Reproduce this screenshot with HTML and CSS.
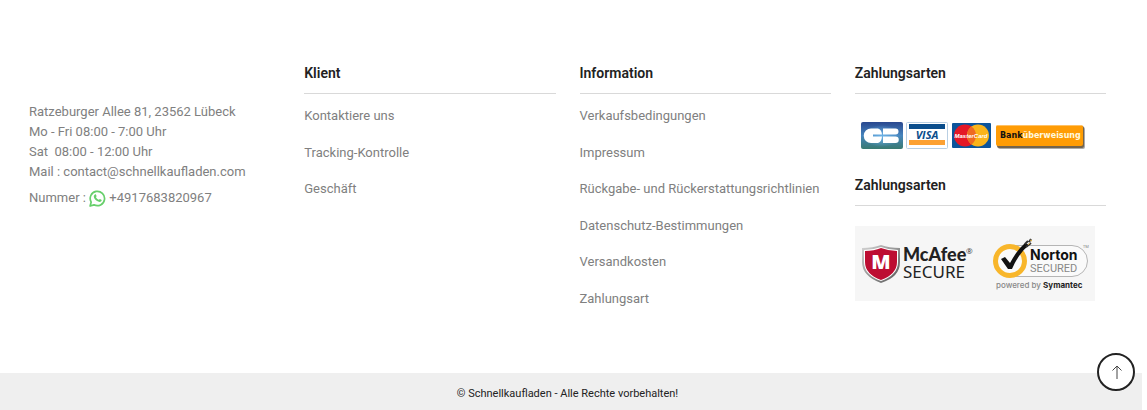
FILE: index.html
```html
<!DOCTYPE html>
<html lang="de">
<head>
	<meta charset="UTF-8">
	<title>Schnellkaufladen</title>
	<link rel="stylesheet" href="styles.css">
</head>
<body>
	<footer class="footer">
		<div class="columns">
			<div class="contact">
				<p>Ratzeburger Allee 81, 23562 Lübeck</p>
				<p>Mo - Fri 08:00 - 7:00 Uhr</p>
				<p>Sat&nbsp; 08:00 - 12:00 Uhr</p>
				<p>Mail : contact@schnellkaufladen.com</p>
				<p class="phone">Nummer :
					<svg class="whatsapp" width="17" height="17" viewBox="0 0 18 18">
						<path d="M1.2 17l1.1-4.2A7.6 7.6 0 1 1 5.3 15.700z" fill="#fff" stroke="#67cf6b" stroke-width="1.8" stroke-linejoin="round"/>
						<path d="M6.200 4.800c.4-.4 1-.3 1.200.2l.6 1.400c.1.500-.6 1-.6 1.400.6 1.200 1.500 2 2.800 2.600.5.100.9-1 1.400-.9l1.500.8c.5.300.300 1.200-.2 1.700-1.200 1.100-3.100.6-4.800-.5-1.500-1-2.800-2.700-3-4.300-.1-1 .4-1.900 1.100-2.400z" fill="#67cf6b"/>
					</svg>
					+4917683820967</p>
			</div>
			<div class="col">
				<h4>Klient</h4>
				<ul class="links">
					<li><a href="#">Kontaktiere uns</a></li>
					<li><a href="#">Tracking-Kontrolle</a></li>
					<li><a href="#">Geschäft</a></li>
				</ul>
			</div>
			<div class="col">
				<h4>Information</h4>
				<ul class="links">
					<li><a href="#">Verkaufsbedingungen</a></li>
					<li><a href="#">Impressum</a></li>
					<li><a href="#">Rückgabe- und Rückerstattungsrichtlinien</a></li>
					<li><a href="#">Datenschutz-Bestimmungen</a></li>
					<li><a href="#">Versandkosten</a></li>
					<li><a href="#">Zahlungsart</a></li>
				</ul>
			</div>
			<div class="col">
				<h4>Zahlungsarten</h4>
				<svg class="payment" width="240" height="41" viewBox="0 0 240 41">
					<defs>
						<linearGradient id="cb" x1="0" y1="0" x2="0" y2="1">
							<stop offset="0" stop-color="#29478f"/>
							<stop offset=".5" stop-color="#4584bd"/>
							<stop offset="1" stop-color="#397a70"/>
						</linearGradient>
						<radialGradient id="cbglow">
							<stop offset="0" stop-color="#6cb2e6"/>
							<stop offset="1" stop-color="#6cb2e6" stop-opacity="0"/>
						</radialGradient>
					</defs>
					<!-- carte bleue -->
					<rect x="6" y="8" width="42" height="27" rx="2" fill="url(#cb)"/>
					<ellipse cx="27" cy="22" rx="19" ry="11" fill="url(#cbglow)"/>
					<path d="M16 14.500h7q3.500 1 4 6h-9v2h9q-.5 5.500-4 6.500h-7a7.200 7.200 0 0 1 0-14.500z" fill="#fff"/>
					<path d="M28 14.500h12.500a3 3 0 0 1 0 6H28zM28 22.500h12.500a3.200 3.200 0 0 1 0 6.500H28z" fill="#fff"/>
					<!-- visa -->
					<rect x="51.500" y="8.500" width="41" height="26" rx="1" fill="#fff" stroke="#b9cfe3"/>
					<path d="M54 10h36v5H54z" fill="#0a4d8c"/>
					<path d="M54 26h36v5H54z" fill="#fca133"/>
					<text class="visa" x="72" y="25" text-anchor="middle">VISA</text>
					<!-- mastercard -->
					<rect x="97" y="9" width="39" height="25" rx="1" fill="#0c549b"/>
					<circle cx="110" cy="21.500" r="11" fill="#e41726"/>
					<circle cx="123" cy="21.500" r="11" fill="#fab41a"/>
					<path d="M116.500 12.600a11 11 0 0 1 0 17.800a11 11 0 0 1 0-17.800z" fill="#ee6a22"/>
					<text class="mastercard" x="116" y="24" text-anchor="middle">MasterCard</text>
					<!-- bank -->
					<rect x="143" y="13" width="87" height="22" rx="2" fill="#aaa"/>
					<rect x="142" y="12" width="87" height="22" rx="2" fill="#74644c"/>
					<rect x="141" y="11" width="87" height="21" rx="2" fill="#ff9c05"/>
					<path d="M142 11.500h85" stroke="#ffc164"/>
					<text class="bank" x="145" y="24">Bank<tspan fill="#fff8df">überweisung</tspan></text>
				</svg>
				<h4>Zahlungsarten</h4>
				<svg class="security" width="240" height="75" viewBox="0 0 240 75">
					<defs>
						<linearGradient id="silver" x1="0" y1="0" x2="1" y2="1">
							<stop offset="0" stop-color="#d5d5d5"/>
							<stop offset="1" stop-color="#555"/>
						</linearGradient>
					</defs>
					<!-- mcafee -->
					<path d="M7 22q11 0 19-3 8 3 19 3v14q0 15-19 21Q7 50 7 36z" fill="url(#silver)"/>
					<path d="M9 24q9 0 17-3 8 3 17 3v12q0 13-17 19Q9 49 9 36z" fill="#fff"/>
					<path d="M10 25q9 0 16-3 8 3 16 3v11q0 12-16 18-16-6-16-18z" fill="#bd0d32"/>
					<text class="shield-m" x="26" y="43" text-anchor="middle">M</text>
					<text class="mcafee" x="48" y="35">McAfee</text>
					<text class="mark" x="111" y="28">®</text>
					<text class="secure" x="48" y="52">SECURE</text>
					<!-- norton -->
					<path d="M155 19.500h62a15.500 15.500 0 0 1 0 31h-62" fill="#fafafa" stroke="#b5b5b5"/>
					<circle cx="155" cy="35" r="14.500" fill="#fafafa" stroke="#f8b62b" stroke-width="5"/>
					<path d="M146 33l4-2 5 6q7-13 15-20l4 2q-10 8-17 24h-4z" fill="#111"/>
					<path d="M170 18l3-3M174 16l2-3M171 21l5-4" stroke="#333" stroke-width="2"/>
					<path d="M173 19l2-2M175 14l2 1" stroke="#d9a636"/>
					<text class="norton" x="175" y="34">Norton</text>
					<text class="secured" x="175" y="46">SECURED</text>
					<text class="tm" x="228" y="22">TM</text>
					<text class="powered" x="141" y="62">powered by <tspan class="symantec">Symantec</tspan></text>
				</svg>
			</div>
		</div>
		<div class="copyright">© Schnellkaufladen - Alle Rechte vorbehalten!</div>
	</footer>
	<button class="totop" type="button" aria-label="Nach oben">
		<svg width="13" height="14" viewBox="0 0 13 14">
			<path d="M7 14V1M2.500 5.500L7 1l4.500 4.500" fill="none" stroke="#444"/>
		</svg>
	</button>
</body>
</html>
```
FILE: styles.css
```css
*{
	box-sizing: border-box;
}
body{
	margin: 0 5px 0 0;
	background: #fff;
	font-family: Roboto, "Liberation Sans", sans-serif;
	font-size: 13px;
	line-height: 1.5;
	color: #808080;
}
h4,p,ul{
	margin: 0;
	padding: 0;
}
.columns{
	display: grid;
	grid-template-columns: repeat(4, 1fr);
	gap: 24px;
	padding: 63px 36px 65px 29px;
}
.contact{
	padding-top: 39px;
	line-height: 20px;
}
.phone{
	margin-top: 6px;
}
.whatsapp{
	vertical-align: middle;
}
h4{
	padding-bottom: 10px;
	border-bottom: 1px solid #d9d9d9;
	font-size: 14px;
	line-height: 20px;
	font-weight: 600;
	color: #222;
}
.links{
	display: grid;
	gap: 17px;
	margin-top: 12px;
	list-style: none;
}
.links a{
	display: block;
	color: #808080;
	text-decoration: none;
}
.payment{
	display: block;
	margin: 20px 0;
}
.security{
	display: block;
	margin-top: 20px;
	background: #f6f6f6;
}
.visa{
	font: italic 700 11px "Open Sans", sans-serif;
	fill: #0a4d8c;
}
.mastercard{
	font: italic 700 6px "Liberation Sans", sans-serif;
	fill: #fff;
}
.bank{
	font: 700 8px "DejaVu Sans", sans-serif;
	fill: #111;
}
.shield-m{
	font: 800 20px "Open Sans", sans-serif;
	fill: #fff;
}
.mcafee{
	font: 900 18px Lato, sans-serif;
	fill: #222;
}
.mark{
	font: 8px "Open Sans", sans-serif;
	fill: #333;
}
.secure{
	font: 17px "Noto Sans", sans-serif;
	fill: #222;
}
.norton{
	font: 700 14px Inter, sans-serif;
	fill: #111;
}
.secured{
	font: 11px Roboto, sans-serif;
	fill: #888;
}
.tm{
	font: 4px "Open Sans", sans-serif;
	fill: #777;
}
.powered{
	font: 500 8px Inter, sans-serif;
	fill: #888;
}
.symantec{
	font-weight: 700;
	fill: #222;
}
.copyright{
	padding: 11px 36px 11px 29px;
	background: #efefef;
	font-size: 11px;
	line-height: 20px;
	text-align: center;
	color: #222;
}
.totop{
	position: fixed;
	right: 12px;
	bottom: 19px;
	display: flex;
	align-items: center;
	justify-content: center;
	width: 38px;
	height: 38px;
	padding: 0;
	border: 2px solid #222;
	border-radius: 50%;
	background: #fff;
	cursor: pointer;
}
```
